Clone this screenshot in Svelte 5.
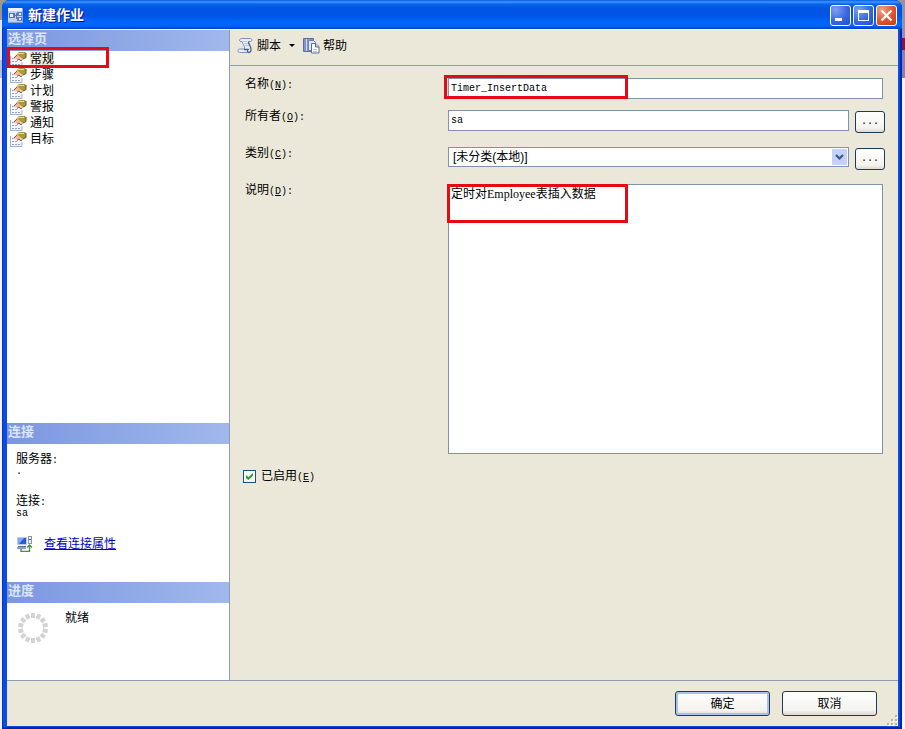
<script>
	let pages = ['常规', '步骤', '计划', '警报', '通知', '目标'];
	let current = '常规';
	let name = 'Timer_InsertData';
	let owner = 'sa';
	let category = '[未分类(本地)]';
	let description = '定时对Employee表插入数据';
	let enabled = true;

	const ticks = Array.from({ length: 14 }, (_, i) => i * 360 / 14);
	const dots = [[8, 0], [4, 4], [8, 4], [0, 8], [4, 8], [8, 8]];
</script>

<div class="desktop">
	<div class="window">
		<header class="titlebar">
			<svg class="app" width="15" height="15" viewBox="0 0 15 15">
				<rect width="15" height="15" fill="#c3cfee" />
				<rect width="15" height="3" fill="#f0f3fd" />
				<rect x="1" y="5" width="6" height="5" fill="#5474bd" />
				<rect x="2" y="6" width="3" height="3" fill="#e8effd" />
				<path d="M7 7.500h2M8.500 5v6" stroke="#5474bd" fill="none" />
				<rect x="9" y="4" width="5" height="4" fill="#5f7dc4" />
				<rect x="11" y="5" width="2" height="2" fill="#e8effd" />
				<rect x="9" y="9" width="5" height="4" fill="#5f7dc4" />
				<rect x="11" y="10" width="2" height="2" fill="#e8effd" />
				<path d="M0 14.500h15M14.500 0v15" stroke="#8a9cc8" />
			</svg>
			<h1>新建作业</h1>
			<div class="controls">
				<button aria-label="最小化">
					<svg width="19" height="19" viewBox="0 0 19 19"><rect x="4" y="12" width="7" height="3" fill="#fff" /></svg>
				</button>
				<button aria-label="最大化">
					<svg width="19" height="19" viewBox="0 0 19 19"><path d="M4 4h11v11H4zM5 7v7h9V7z" fill="#fff" fill-rule="evenodd" /></svg>
				</button>
				<button class="close" aria-label="关闭">
					<svg width="19" height="19" viewBox="0 0 19 19"><path d="M4.500 4.500l10 10M14.500 4.500l-10 10" stroke="#fff" stroke-width="2.200" /></svg>
				</button>
			</div>
		</header>

		<div class="body">
			<aside>
				<nav>
					<h2>选择页</h2>
					<ul>
						{#each pages as page}
						<li class:current={page == current}>
							<button on:click={() => current = page}>
								<svg width="17" height="16" viewBox="0 0 17 16">
									<rect x="1" y="5" width="11" height="10" fill="#f3f6fd" />
									<path d="M.5 5v10.500h11.500V11" fill="none" stroke="#9fb0d6" />
									<path d="M2 7.500h2M2 10.500h2M5 10.500h2M2 13.500h2M5 13.500h2M8 13.500h2" stroke="#8fa0cc" />
									<path d="M3 7.500L7 3l3 1 3 3-2 2-2-1-2 1.500-1-2-2 1z" fill="#eeb99a" />
									<path d="M4 7l3-3M7 9.500l2-1.500 2 2 1.500-1.500" fill="none" stroke="#8c5a48" />
									<path d="M7 3l2-2h6l1 1.500v4l-3 1.500-4-3z" fill="#a99a3a" />
									<path d="M8 2.500h6" stroke="#e6dc8c" />
									<path d="M16 2v4.500l-3 1.500" fill="none" stroke="#61571c" />
								</svg>
								<span>{page}</span>
							</button>
							{#if page == '常规'}<i class="mark mark-page"></i>{/if}
						</li>
						{/each}
					</ul>
				</nav>

				<section class="connection">
					<h2>连接</h2>
					<dl>
						<dt>服务器<span class="latin">:</span></dt>
						<dd>.</dd>
						<dt>连接<span class="latin">:</span></dt>
						<dd>sa</dd>
					</dl>
					<a href="#properties">
						<svg width="17" height="16" viewBox="0 0 17 16">
							<rect x="1" y="1" width="10" height="8" fill="#b9cbf0" />
							<rect x="2" y="2" width="8" height="6" fill="#2a5bd0" />
							<path d="M2 2h6L3 8H2z" fill="#7ea9f6" />
							<path d="M2 10.500h8" stroke="#5670a8" />
							<path d="M1 12h9" stroke="#8f9fc3" stroke-width="2" />
							<rect x="12.500" y=".5" width="3" height="7" fill="#eef1f8" stroke="#8895b2" />
							<path d="M13 3.500h2" stroke="#55658c" />
							<path d="M5 13v2.500h8.500V10M11 11.500L13.500 9l2.500 2.500" fill="none" stroke="#45982f" stroke-width="1.400" />
						</svg>
						<span>查看连接属性</span>
					</a>
				</section>

				<section class="progress">
					<h2>进度</h2>
					<div class="status">
						<svg width="32" height="32" viewBox="-16 -16 32 32">
							{#each ticks as angle}
							<rect x="-2" y="-15" width="4" height="5" fill="#d3d3d3" transform="rotate({angle})" />
							{/each}
						</svg>
						<span>就绪</span>
					</div>
				</section>
			</aside>

			<main>
				<div class="toolbar">
					<button>
						<svg width="17" height="17" viewBox="0 0 17 17">
							<path d="M4 1h9c3 0 3 4 0 4h-1.500c0 3 3 5 2.500 8l-1.500 3H3c-3 0-3-4 0-4h4c.5-3-4-5-4-8.500z" fill="#e6edfc" />
							<path d="M2.500 4c0-2 1-2.500 2-2.500h9c1.500 0 2 3 0 3h-2.500M3 4.500h2c.5 3 3 4.500 2.500 7.500H2.500c-2 0-2 3.500 0 3.500H12" fill="none" stroke="#7d8fbb" />
							<path d="M11.500 5c0 3 3.500 5 2.500 8.500-.5 1.500-1 2-2 2-1.500 0-2-2-1-3H7" fill="none" stroke="#4c5c88" stroke-width="1.300" />
							<path d="M6 4.500h4M7 6.500h4M8 8.500h4" stroke="#b7c6e8" />
						</svg>
						<span>脚本</span>
						<svg class="caret" width="6" height="3" viewBox="0 0 6 3"><path d="M0 0h6L3 3z" /></svg>
					</button>
					<button>
						<svg width="17" height="17" viewBox="0 0 17 17">
							<path d="M.5 1.500h10v13H.5z" fill="#8497c8" stroke="#5b6c9c" />
							<path d="M3.500 2v12" stroke="#c6d2f0" />
							<path d="M5.500 3.500h5l2 2v8h-7z" fill="#dfe7fa" stroke="#6e80b0" />
							<path d="M8.500 6.500h4l3.500 3v6.500H8.500z" fill="#fff" stroke="#5b6c9c" />
							<path d="M12.500 6.500v3.500H16" fill="#c9d6f3" stroke="#5b6c9c" />
							<path d="M10 12.500h4M10 14.500h4" stroke="#b9c7e6" />
						</svg>
						<span>帮助</span>
					</button>
				</div>

				<form on:submit|preventDefault>
					<label for="name">名称<span class="latin">(<u>N</u>):</span></label>
					<div class="field wide">
						<input id="name" type="text" bind:value={name} />
						<i class="mark mark-name"></i>
					</div>

					<label for="owner">所有者<span class="latin">(<u>O</u>):</span></label>
					<div class="field">
						<input id="owner" type="text" bind:value={owner} />
						<button type="button" class="more" aria-label="浏览所有者">...</button>
					</div>

					<label for="category">类别<span class="latin">(<u>C</u>):</span></label>
					<div class="field">
						<div class="combo">
							<select id="category" bind:value={category}>
								<option>[未分类(本地)]</option>
							</select>
							<svg width="15" height="16" viewBox="0 0 15 16">
								<rect width="15" height="16" rx="1" fill="#c2d2fb" />
								<path d="M4 6l3.500 3.500L11 6" fill="none" stroke="#3f5685" stroke-width="2.200" />
							</svg>
						</div>
						<button type="button" class="more" aria-label="浏览类别">...</button>
					</div>

					<label for="description">说明<span class="latin">(<u>D</u>):</span></label>
					<div class="field wide">
						<textarea id="description" spellcheck="false" bind:value={description}></textarea>
						<i class="mark mark-description"></i>
					</div>

					<div class="enabled">
						<input id="enabled" type="checkbox" bind:checked={enabled} />
						<label for="enabled">已启用<span class="latin">(<u>E</u>)</span></label>
					</div>
				</form>
			</main>
		</div>

		<footer>
			<button class="default">确定</button>
			<button>取消</button>
			<svg class="grip" width="11" height="11" viewBox="0 0 11 11">
				{#each dots as [x, y]}
				<rect x={x + 1} y={y + 1} width="2" height="2" fill="#fff" />
				<rect {x} {y} width="2" height="2" fill="#b8b4a2" />
				{/each}
			</svg>
		</footer>
	</div>
</div>

<style>
	:global(body) {
		margin: 0;
	}
	.desktop {
		box-sizing: border-box;
		min-height: 100vh;
		display: flex;
		padding: 0 3px 0 2px;
		background: linear-gradient(#8b93b4 0 38px, #8c0f45 38px 50px, #7f83b6 50px 78px, #f4f3fa 78px) right / 3px 100% no-repeat,
			linear-gradient(#9c988c 0 20px, #e3e6ee 20px 60px, #b9bdd0 60px 78px, #f1f2f7 78px);
		font-family: "Liberation Sans", "Noto Sans CJK SC", sans-serif;
		font-size: 12px;
		line-height: 14px;
		color: #000;
	}
	.window {
		flex: 1;
		min-width: 0;
		display: flex;
		flex-direction: column;
		padding: 0 4px 3px 5px;
		border-radius: 8px 8px 0 0;
		background: #0a4be0;
		box-shadow: inset 1px 0 #0831d9, inset -2px 0 #0025a8, inset 0 -2px #0025a8;
	}
	button, input, select, textarea {
		font: inherit;
		color: inherit;
	}
	button {
		padding: 0;
		border: 0;
		background: none;
	}
	h1, h2, ul, dl, dd {
		margin: 0;
		padding: 0;
	}
	svg {
		display: block;
		flex: none;
	}
	.latin, dd, .field input {
		font-family: "Liberation Mono", monospace;
		font-size: 10px;
	}
	.latin {
		line-height: 1;
	}

	/* title bar */
	.titlebar {
		display: flex;
		align-items: center;
		gap: 5px;
		height: 29px;
		margin: 0 -4px 0 -5px;
		padding: 1px 5px 0 6px;
		box-sizing: border-box;
		border-radius: 8px 8px 0 0;
		background: linear-gradient(#0a5be0 0, #3f97ff 2px, #0a66ee 4px, #0055e3 8px, #0055e5 16px, #0066ff 22px, #0064fa 26px, #003fc4 29px);
	}
	h1 {
		flex: 1;
		font-size: 14px;
		line-height: 20px;
		color: #fff;
		text-shadow: 1px 1px #0f1089;
	}
	.controls {
		display: flex;
		gap: 2px;
		padding-top: 1px;
	}
	.controls button {
		width: 21px;
		height: 21px;
		border: 1px solid #fff;
		border-radius: 3px;
		background: radial-gradient(circle at 25% 20%, #7f9ff2, #3a66e4 55%, #1f4fd0);
	}
	.controls .close {
		background: radial-gradient(circle at 25% 20%, #f0a187, #e0532f 55%, #c43c18);
	}

	/* left pane */
	.body {
		flex: 1;
		display: flex;
		background: #ebe8d9;
		border-top: 1px solid #f8f7f0;
	}
	aside {
		flex: none;
		width: 222px;
		display: flex;
		flex-direction: column;
		background: #fff;
		border-right: 1px solid #8e9fb3;
	}
	h2 {
		height: 21px;
		padding-left: 1px;
		font-size: 13px;
		line-height: 18px;
		color: #dbe6fc;
		background: linear-gradient(90deg, #7b97e0, #a0b8ec);
	}
	nav {
		flex: 1;
	}
	ul {
		list-style: none;
	}
	li {
		position: relative;
		height: 16px;
	}
	li button {
		display: flex;
		align-items: center;
		gap: 3px;
		height: 16px;
		padding-left: 3px;
	}
	li span {
		line-height: 16px;
	}
	.current span {
		background: #ebe8d9;
	}
	.connection {
		height: 159px;
	}
	.connection dl {
		padding: 8px 9px 0;
	}
	dt {
		height: 14px;
	}
	dd {
		height: 14px;
		line-height: 12px;
	}
	dd + dt {
		margin-top: 14px;
	}
	.connection a {
		display: flex;
		align-items: center;
		gap: 11px;
		margin: 14px 9px 0;
		color: #0000d0;
	}
	.progress {
		height: 98px;
	}
	.status {
		display: flex;
		gap: 16px;
		padding: 8px 10px;
	}
	.status svg {
		margin-top: 1px;
	}

	/* job form */
	main {
		flex: 1;
		min-width: 0;
	}
	.toolbar {
		display: flex;
		gap: 8px;
		height: 36px;
		padding: 0 7px 4px;
		box-sizing: border-box;
		border-bottom: 1px solid #8e9fb3;
	}
	.toolbar button {
		display: flex;
		align-items: center;
		gap: 3px;
	}
	.toolbar .caret {
		margin-left: 5px;
	}
	form {
		display: grid;
		grid-template-columns: 203px 1fr;
		grid-template-rows: 21px 26px 26px 270px auto;
		row-gap: 11px;
		padding: 12px 13px 16px 15px;
	}
	label {
		line-height: 12px;
	}
	.field {
		position: relative;
		display: flex;
		align-items: flex-start;
		gap: 6px;
	}
	.wide {
		margin-right: 2px;
	}
	.field input, select, textarea {
		box-sizing: border-box;
		flex: 1;
		min-width: 0;
		height: 21px;
		margin: 0;
		padding: 0 2px;
		border: 1px solid #7f93ab;
		border-radius: 0;
		background: #fff;
		outline: none;
	}
	.combo {
		position: relative;
		flex: 1;
		display: flex;
	}
	select {
		height: 20px;
		padding: 0 20px 0 4px;
		appearance: none;
	}
	.combo svg {
		position: absolute;
		top: 2px;
		right: 2px;
		pointer-events: none;
	}
	textarea {
		height: 270px;
		padding-top: 2px;
		font-family: "Liberation Serif", "Noto Sans CJK SC", serif;
		resize: none;
	}
	.more, footer button {
		border: 1px solid #1d3c5c;
		border-radius: 3px;
		background: linear-gradient(#fff, #f4f3ee 80%, #dcd8cc);
	}
	.more {
		width: 30px;
		height: 22px;
		margin-top: 1px;
		font-family: "Liberation Mono", monospace;
		font-size: 10px;
	}
	.enabled {
		grid-column: 1 / -1;
		display: flex;
		align-items: center;
		gap: 5px;
		margin: 5px 0 0 -2px;
	}
	.enabled input {
		appearance: none;
		box-sizing: border-box;
		width: 13px;
		height: 13px;
		margin: 0;
		border: 1px solid #1c5180;
		background: #f6f9f6;
		display: grid;
		place-items: center;
	}
	.enabled input:checked::before {
		content: "";
		width: 7px;
		height: 7px;
		background: #2f9a35;
		clip-path: polygon(0 30%, 35% 62%, 100% 0, 100% 40%, 35% 100%, 0 70%);
	}

	/* red marker frames */
	.mark {
		position: absolute;
		box-sizing: border-box;
		border: 3px solid #e60a14;
		pointer-events: none;
	}
	.mark-page {
		z-index: 1;
		top: -4px;
		left: 0;
		width: 102px;
		height: 21px;
	}
	.mark-name {
		top: -3px;
		left: -4px;
		width: 184px;
		height: 24px;
	}
	.mark-description {
		top: 0;
		left: -1px;
		width: 181px;
		height: 39px;
	}

	/* dialog buttons */
	footer {
		position: relative;
		display: flex;
		justify-content: flex-end;
		gap: 12px;
		height: 46px;
		padding: 10px 21px 0;
		box-sizing: border-box;
		background: #ebe8d9;
		border-top: 1px solid #8e9fb3;
	}
	footer button {
		width: 95px;
		height: 25px;
	}
	footer .default {
		box-shadow: inset 0 0 0 2px #a9c0f0;
	}
	.grip {
		position: absolute;
		right: 0;
		bottom: 0;
	}
</style>
